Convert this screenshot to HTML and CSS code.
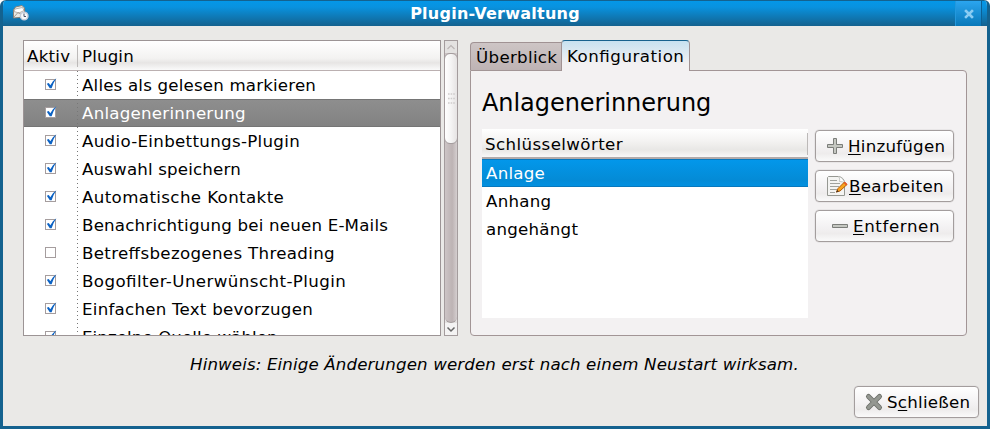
FILE: index.html
```html
<!DOCTYPE html>
<html lang="de">
<head>
<meta charset="utf-8">
<title>Plugin-Verwaltung</title>
<link rel="stylesheet" href="styles.css">
</head>
<body>
<svg class="defs" width="0" height="0" aria-hidden="true">
  <symbol id="box" viewBox="0 0 13 13">
    <rect x="1.5" y="2.5" width="10" height="10" fill="#fff" stroke="#a59d9e"/>
  </symbol>
  <symbol id="checked" viewBox="0 0 13 13">
    <rect x="1.5" y="2.5" width="10" height="10" fill="#fff" stroke="#a59d9e"/>
    <path d="M2.8 6.7 4.8 6 6.3 8.2Q8.4 3.8 12.4 1.3 9.2 6 7.6 11.3H5.8Z" fill="#0b62c4"/>
  </symbol>
</svg>
<div class="window">
  <header class="titlebar">
    <svg class="app-icon" width="18" height="18" viewBox="0 0 18 18">
      <path d="M1.5 6 3.5 3 10 1.5 12.5 4V13L1.5 14Z" fill="#eceae4" stroke="#8a8178"/>
      <path d="M3 5 10.5 3.5 12 6.5 7 9 2 7.5Z" fill="#fff" stroke="#a8a29b" stroke-width=".8"/>
      <path d="M2 13 6 8.5 12 12" fill="none" stroke="#a39d97"/>
      <circle cx="12.2" cy="12" r="3.8" fill="#f7f8fa" stroke="#c5ccda" stroke-width="1.4"/>
      <path d="M12 9.5V12.5H14" fill="none" stroke="#47536c"/>
    </svg>
    <h1>Plugin-Verwaltung</h1>
    <div class="close-cell"><svg width="10" height="10" viewBox="0 0 10 10"><path d="M2 2 8 8M8 2 2 8" stroke="#8accf3" stroke-width="2.6" stroke-linecap="square"/></svg></div>
  </header>
  <main>
    <div class="panes">
      <section class="list">
        <div class="list-head"><span class="c1 t-aktiv">Aktiv</span><span class="c2 t-plugin">Plugin</span></div>
        <div class="row"><i><svg width="13" height="13"><use href="#checked"/></svg></i><span class="r1">Alles als gelesen markieren</span></div>
        <div class="row selected"><i><svg width="13" height="13"><use href="#checked"/></svg></i><span class="r2">Anlagenerinnerung</span></div>
        <div class="row"><i><svg width="13" height="13"><use href="#checked"/></svg></i><span class="r3">Audio-Einbettungs-Plugin</span></div>
        <div class="row"><i><svg width="13" height="13"><use href="#checked"/></svg></i><span class="r4">Auswahl speichern</span></div>
        <div class="row"><i><svg width="13" height="13"><use href="#checked"/></svg></i><span class="r5">Automatische Kontakte</span></div>
        <div class="row"><i><svg width="13" height="13"><use href="#checked"/></svg></i><span class="r6">Benachrichtigung bei neuen E-Mails</span></div>
        <div class="row"><i><svg width="13" height="13"><use href="#box"/></svg></i><span class="r7">Betreffsbezogenes Threading</span></div>
        <div class="row"><i><svg width="13" height="13"><use href="#checked"/></svg></i><span class="r8">Bogofilter-Unerwünscht-Plugin</span></div>
        <div class="row"><i><svg width="13" height="13"><use href="#checked"/></svg></i><span class="r9">Einfachen Text bevorzugen</span></div>
        <div class="row"><i><svg width="13" height="13"><use href="#checked"/></svg></i><span class="r10">Einzelne Quelle wählen</span></div>
      </section>
      <div class="scrollbar">
        <svg class="up" width="12" height="12" viewBox="0 0 12 12"><path d="M2.5 8 6 4.5 9.5 8" fill="none" stroke="#bbb5b5" stroke-width="1.2"/></svg>
        <div class="track"><div class="thumb"><svg width="8" height="12" viewBox="0 0 8 12"><path d="M1 1H8M1 5.5H8M1 10H8" stroke="#cfcccc" stroke-width="1.6" stroke-dasharray="1.6 1"/></svg></div></div>
        <svg class="down" width="12" height="12" viewBox="0 0 12 12"><path d="M2.5 4.5 6 8 9.5 4.5" fill="none" stroke="#666" stroke-width="1.5"/></svg>
      </div>
      <section class="notebook">
        <div class="tabs"><div class="tab"><span class="t-uber">Überblick</span></div><div class="tab active"><span class="t-konf">Konfiguration</span></div></div>
        <div class="panel">
          <h2><span>Anlagenerinnerung</span></h2>
          <div class="config">
            <div class="keywords">
              <div class="kw-head"><span class="t-schl">Schlüsselwörter</span></div>
              <div class="kw on"><span>Anlage</span></div>
              <div class="kw"><span>Anhang</span></div>
              <div class="kw"><span>angehängt</span></div>
            </div>
            <div class="buttons">
              <button class="b-add"><svg width="20" height="20" viewBox="0 0 20 20"><path d="M8.5 2.5H11.5V8.5H17.5V11.5H11.5V17.5H8.5V11.5H2.5V8.5H8.5Z" fill="#c5c7c1" stroke="#7b7d79"/></svg><span><u>H</u>inzufügen</span></button>
              <button class="b-edit"><svg width="22" height="22" viewBox="0 0 22 22"><path d="M2.5 1.5H12.5Q18.5 2.5 18.5 8.5V20.5H1.5V2.5Z" fill="#f4f4f2" stroke="#969892"/><path d="M12.5 1.5Q14.5 4 13.5 6.5 17 6 18.5 8.5 18 3 12.5 1.5" fill="#fff" stroke="#b5b6b2" stroke-width=".7"/><path d="M4 5.5H11M4 8.5H14M4 11.5H13M4 14.5H11M4 17.5H9" stroke="#a0a29d"/><path d="M10.5 17 12 13.5 18.5 7 21 9.5 14 16Z" fill="#f8a31d" stroke="#b45b08"/><path d="M18.8 6.8 21.3 9.3 20.2 10.4 17.7 7.9Z" fill="#e7582b"/><path d="M10 17.5 11.2 15 12.8 16.5Z" fill="#432f22"/></svg><span><u>B</u>earbeiten</span></button>
              <button class="b-del"><svg width="20" height="20" viewBox="0 0 20 20"><path d="M2.5 8.5H17.5V11.5H2.5Z" fill="#c5c7c1" stroke="#7b7d79"/></svg><span><u>E</u>ntfernen</span></button>
            </div>
          </div>
        </div>
      </section>
    </div>
    <p class="hint"><span>Hinweis: Einige Änderungen werden erst nach einem Neustart wirksam.</span></p>
    <footer><button class="b-close"><svg width="20" height="20" viewBox="0 0 20 20"><path d="M4.5 4.5 15.5 15.5M15.5 4.5 4.5 15.5" stroke="#6c6f69" stroke-width="5" stroke-linecap="round"/><path d="M4.5 4.5 15.5 15.5M15.5 4.5 4.5 15.5" stroke="#949791" stroke-width="3.2" stroke-linecap="round"/></svg><span>S<u>c</u>hließen</span></button></footer>
  </main>
</div>
</body>
</html>
```

FILE: styles.css
```css
* { box-sizing: border-box; }
body { margin: 0; background: #fff; color: #000; font: 16.67px/20px "DejaVu Sans", sans-serif; overflow: hidden; }
.defs { position: absolute; }
span { white-space: pre; letter-spacing: .24px; font-feature-settings: "liga" 1; }
svg { display: block; flex: none; }
.window { width: 990px; height: 429px; background: #eae9e7; border: 3px solid #14628f; border-top: 0; border-radius: 6px 6px 0 0; overflow: hidden; }
.titlebar { height: 26px; margin: 0 -3px; display: flex; background: linear-gradient(#14628f 0 1px, #0497e8 1px, #0992df 7px, #14628f); }
.app-icon { margin: 4px 0 0 12px; }
.titlebar h1 { flex: 1; margin: 0 0 0 5px; padding-top: 4px; font-size: 16px; line-height: 20px; letter-spacing: .24px; color: #fff; text-align: center; }
.close-cell { width: 27px; height: 25px; margin: 1px 8px 0 0; border-left: 1px solid #2398dd; border-right: 1px solid #0c6196; background: linear-gradient(#2ba5ef, #0878b9); display: flex; align-items: center; justify-content: center; }
main { padding: 14px 8px 0 20px; }
.panes { display: flex; height: 296px; }
.list { width: 418px; border: 1px solid #9c9495; background: #fff; overflow: hidden; }
.list-head { height: 30px; display: flex; background: linear-gradient(#fff, #f3f2f1 60%, #e7e5e4 75%, #fafafa); border-bottom: 1px solid #bbb0b1; line-height: 31px; }
.list-head .c1 { width: 54px; height: 22px; line-height: 24px; margin-top: 4px; padding-left: 3px; border-right: 1px solid #bcb9b8; }
.list-head .c2 { padding-left: 4px; letter-spacing: .14px; }
.row { height: 28px; display: flex; line-height: 30px; }
.row i { width: 54px; padding: 6px 0 0 20px; background: linear-gradient(#777 0 1px, transparent 1px) 53px 0 / 1px 4px repeat-y; }
.row span { padding-left: 4px; }
.row.selected { color: #fff; background: linear-gradient(#757575 0 1px, #8e8e8e 1px, #828282 27px, #757575 27px); }
.row .r1 { letter-spacing: .18px; }
.row .r3 { letter-spacing: .31px; }
.row .r4 { letter-spacing: .16px; }
.row .r5 { letter-spacing: .38px; }
.row .r6 { letter-spacing: .2px; }
.row .r7 { letter-spacing: .33px; }
.row .r8 { letter-spacing: .42px; }
.row .r10 { letter-spacing: .08px; }
.scrollbar { width: 14px; margin-left: 3px; border: 1px solid #a49c9d; display: flex; flex-direction: column; background: #e4e2e1; }
.track { flex: 1; background: linear-gradient(90deg, #cdc5c6, #bdb3b4 60%, #d4cecf); border-bottom: 1px solid #a49c9d; border-radius: 0 0 6px 6px; }
.thumb { height: 91px; margin: 0 -1px; border: 1px solid #a49c9d; border-radius: 6px; background: linear-gradient(90deg, #fff, #f5f4f4 50%, #e6e3e3); display: flex; align-items: center; justify-content: center; }
.down { background: #f4f3f3; }
.notebook { width: 497px; margin-left: 12px; }
.tabs { display: flex; height: 30px; align-items: flex-end; }
.tab { width: 92px; height: 28px; padding: 5px 0 0 5px; border: 1px solid #a09293; border-bottom: 0; border-radius: 4px 0 0; background: linear-gradient(#cdc5c5, #beb3b4); }
.tab.active { width: 129px; height: 31px; margin: 0 0 -1px -1px; padding-top: 6px; border-top-color: #17628e; border-radius: 4px 4px 0 0; background: linear-gradient(#c7e1f0, #f3f1f2 23px); position: relative; }
.t-uber { letter-spacing: .31px; }
.t-konf { letter-spacing: .5px; }
.panel { height: 266px; border: 1px solid #a29596; border-radius: 0 4px 4px 4px; background: #f3f1f2; padding: 17px 12px 0 11px; }
h2 { margin: 0; height: 41px; font-size: 24px; line-height: 30px; font-weight: 400; }
h2 span { letter-spacing: -.06px; }
.config { display: flex; gap: 7px; }
.keywords { width: 326px; height: 189px; background: #fff; }
.kw-head { height: 30px; padding: 6px 0 0 3px; border-bottom: 2px solid #b1aaaa; background: linear-gradient(#bcb9b8, #bcb9b8) 325px 4px / 1px 22px no-repeat, linear-gradient(#fff, #f3f2f1 45%, #e8e7e5 75%, #f8f8f8); }
.t-schl { letter-spacing: .4px; }
.kw { height: 28px; padding: 5px 0 0 4px; }
.kw.on { color: #fff; background: linear-gradient(#0878bd 0 1px, #0397ea 1px, #048bd6 21px, #0290e0 27px, #0878bd 27px); }
.buttons { display: flex; flex-direction: column; gap: 8px; padding-top: 1px; }
button { height: 32px; padding: 0; font: inherit; color: #000; border: 1px solid #a39d9d; border-radius: 4px; background: linear-gradient(#fff, #f2f0f1 60%, #eeecec 75%, #fafafa); display: flex; align-items: center; box-shadow: 0 0 0 .5px #dedbdb; }
button span { padding-top: 2px; }
.buttons button { width: 139px; }
u { text-decoration-thickness: 1px; text-underline-offset: 2px; }
.b-add { padding-left: 9px; }
.b-add span { margin-left: 3px; }
.b-edit { padding-left: 10px; }
.b-edit span { margin-left: 1px; letter-spacing: .34px; }
.b-del { padding-left: 14px; }
.b-del span { margin-left: 3px; letter-spacing: .6px; }
.hint { margin: 19px 0 0; padding-left: 167px; font-style: italic; }
.hint span { letter-spacing: .13px; }
footer { display: flex; justify-content: flex-end; margin-top: 11px; }
.b-close { width: 125px; padding-left: 9px; }
.b-close span { margin-left: 3px; }
```
